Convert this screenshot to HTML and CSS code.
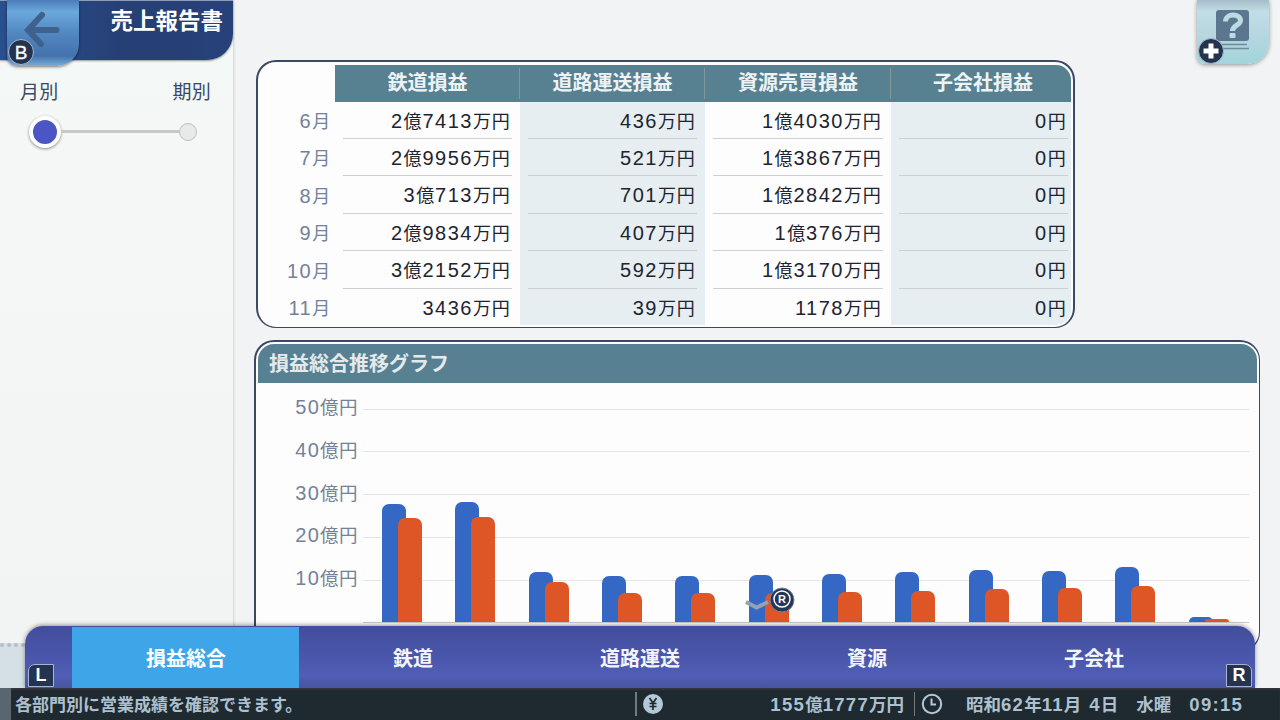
FILE: index.html
```
<!DOCTYPE html>
<html lang="ja">
<head>
    <meta charset="UTF-8">
    <meta name="viewport" content="width=device-width, initial-scale=1.0">
    <title>売上報告書</title>
    <link rel="stylesheet" href="styles.css">
</head>
<body>
    <div class="screen">
        <div class="main">
            <aside class="sidebar">
                <header class="title">
                    <h1>売上報告書</h1>
                    <button class="back">
                        <svg width="72" height="66" viewBox="0 0 72 66">
                            <path d="M49.500 30H22M35 15L21 30L34 44" fill="none" stroke="#3f628c" stroke-width="6" stroke-linecap="round" stroke-linejoin="miter"/>
                        </svg>
                    </button>
                    <span class="key-round key-b">B</span>
                </header>
                <div class="switch-labels"><span>月別</span><span>期別</span></div>
                <div class="slider">
                    <span class="knob"></span>
                    <span class="track"></span>
                    <span class="stop"></span>
                </div>
                <div class="ground"></div>
            </aside>
            <div class="content">
                <section class="table-panel">
                    <div class="months">
                        <div>6月</div>
                        <div>7月</div>
                        <div>8月</div>
                        <div>9月</div>
                        <div>10月</div>
                        <div>11月</div>
                    </div>
                    <div class="columns" id="columns"></div>
                </section>
                <section class="chart-panel">
                    <h2>損益総合推移グラフ</h2>
                    <div class="chart">
                        <div class="scale">
                            <div>50億円</div>
                            <div>40億円</div>
                            <div>30億円</div>
                            <div>20億円</div>
                            <div>10億円</div>
                        </div>
                        <div class="plot">
                            <div class="line"></div>
                            <div class="line"></div>
                            <div class="line"></div>
                            <div class="line"></div>
                            <div class="line"></div>
                            <div class="bars" id="bars"></div>
                        </div>
                    </div>
                </section>
            </div>
        </div>
        <button class="help">
            <svg width="72" height="64" viewBox="0 0 72 64">
                <rect x="19" y="10" width="33" height="31" rx="3" fill="#5d7690"/>
                <path d="M28.500 21.500C28.500 13 43.500 13 43.500 20.500C43.500 25.500 35.500 25 35.500 31" fill="none" stroke="#b9dbe4" stroke-width="5"/>
                <rect x="32.500" y="33" width="6" height="5" rx="1" fill="#b9dbe4"/>
                <path d="M24 44.500H50M24 48.500H52" stroke="#6d8b9d" stroke-width="1.500"/>
            </svg>
        </button>
        <span class="key-round key-plus">
            <svg width="16" height="16" viewBox="0 0 16 16"><path d="M8 0.500V15.500M0.500 8H15.500" stroke="#fff" stroke-width="5"/></svg>
        </span>
        <div class="scroll-cue">
            <svg width="26" height="14" viewBox="0 0 26 14"><path d="M2 3L12.500 8.500L24 3" fill="none" stroke="#8fa3b3" stroke-width="4"/></svg>
            <svg width="26" height="26" viewBox="0 0 26 26">
                <circle cx="13" cy="13" r="12" fill="#24365a" stroke="#7b8497"/>
                <circle cx="13" cy="12" r="8" fill="none" stroke="#fff" stroke-width="1.500"/>
                <text x="13" y="16" class="stick">R</text>
            </svg>
        </div>
        <nav class="tabs">
            <button class="tab active">損益総合</button>
            <button class="tab">鉄道</button>
            <button class="tab">道路運送</button>
            <button class="tab">資源</button>
            <button class="tab">子会社</button>
            <span class="key-square key-l">L</span>
            <span class="key-square key-r">R</span>
        </nav>
        <footer class="status">
            <p class="hint">各部門別に営業成績を確認できます。</p>
            <div class="money">
                <svg width="20" height="20" viewBox="0 0 20 20">
                    <circle cx="10" cy="10" r="10" fill="#b3c8d9"/>
                    <path d="M6.500 4L10 9L13.500 4M10 9V16M6.500 9.500H13.500M6.500 12.500H13.500" fill="none" stroke="#1e2930" stroke-width="1.700"/>
                </svg>
                <span class="amount">155億1777万円</span>
            </div>
            <div class="date">
                <svg width="22" height="22" viewBox="0 0 22 22">
                    <circle cx="11" cy="11" r="9.200" fill="none" stroke="#b3c8d9" stroke-width="2"/>
                    <path d="M10.500 5.500V11.500H15" fill="none" stroke="#b3c8d9" stroke-width="2"/>
                </svg>
                <span class="day">昭和62年11月 4日</span>
                <span class="week">水曜</span>
                <span class="time">09:15</span>
            </div>
        </footer>
    </div>
    <script>
        const columns = [
            ['鉄道損益', '2億7413万円', '2億9956万円', '3億713万円', '2億9834万円', '3億2152万円', '3436万円'],
            ['道路運送損益', '436万円', '521万円', '701万円', '407万円', '592万円', '39万円'],
            ['資源売買損益', '1億4030万円', '1億3867万円', '1億2842万円', '1億376万円', '1億3170万円', '1178万円'],
            ['子会社損益', '0円', '0円', '0円', '0円', '0円', '0円']
        ];

        // bar heights in px: income, expense
        const bars = [
            [118, 104], [120, 105], [50, 40], [46, 29], [46, 29], [47, 29],
            [48, 30], [50, 31], [52, 33], [51, 34], [55, 36], [5, 3]
        ];

        // digits are set slightly larger than the kanji
        function digits(text) {
            return text.replace(/\d+/g, '<span class="num">$&</span>');
        }

        document.getElementById('columns').innerHTML = columns.map(([head, ...cells]) =>
            `<div class="column"><h3>${head}</h3>${cells.map(c => `<div class="cell">${digits(c)}</div>`).join('')}</div>`
        ).join('');

        document.getElementById('bars').innerHTML = bars.map(([income, expense]) =>
            `<div class="group"><div class="bar income" style="height: ${income}px"></div><div class="bar expense" style="height: ${expense}px"></div></div>`
        ).join('');

        document.querySelectorAll('.months div, .scale div, .amount, .day').forEach(element => {
            element.innerHTML = digits(element.textContent);
        });
    </script>
</body>
</html>
```
FILE: styles.css
```
* {
    box-sizing: border-box;
}
body {
    margin: 0;
    font-family: "Liberation Sans", "Noto Sans CJK JP", sans-serif;
    color: #1d2430;
    overflow: hidden;
}
h1, h2, h3, p {
    margin: 0;
}
button {
    border: none;
    padding: 0;
    font-family: inherit;
}
svg {
    display: block;
}
.screen {
    position: relative;
    width: 1280px;
    height: 720px;
    overflow: hidden;
    background-color: #f2f3f5;
}
.main {
    display: flex;
    height: 688px;
}

/* left side */
.sidebar {
    display: flex;
    flex-direction: column;
    width: 233px;
    background: linear-gradient(#f4f8f7, #f3f6f5 50%, #f2f3f3);
    box-shadow: 0 0 3px rgba(0, 0, 0, 0.25);
}
.title {
    position: relative;
    height: 60px;
    padding: 7px 10px 0 0;
    background: linear-gradient(90deg, #28508f, #263f74 55%, #27417a);
    border-top: 1px solid #8d9bb8;
    border-bottom-right-radius: 26px;
    box-shadow: 0 1px 2px rgba(0, 0, 0, 0.4);
}
.title h1 {
    font-size: 22.5px;
    line-height: 28px;
    text-align: right;
    color: #fff;
}
.back {
    position: absolute;
    left: 7px;
    top: -1px;
    width: 72px;
    height: 66px;
    background: linear-gradient(#4a7cb8, #6ba8dc 18%, #5287c2 50%, #4472ad 85%, #78b0d8);
    border-bottom-right-radius: 22px;
    border-bottom-left-radius: 10px;
    box-shadow: 0 1px 3px rgba(0, 0, 0, 0.5);
}
.key-round {
    position: absolute;
    display: flex;
    align-items: center;
    justify-content: center;
    width: 26px;
    height: 26px;
    border: 1.5px solid #a9b9cd;
    border-radius: 50%;
    background-color: #24334f;
    color: #fff;
}
.key-b {
    left: 8px;
    top: 38px;
    padding-top: 1px;
    font-size: 19px;
    -webkit-text-stroke: 0.3px #fff;
}
.switch-labels {
    display: flex;
    justify-content: space-between;
    padding: 19px 22px 0 20px;
    font-size: 19px;
    letter-spacing: 0.3px;
    line-height: 28px;
    color: #3c4962;
}
.slider {
    display: flex;
    align-items: center;
    margin: 9px 36px 0 29px;
}
.knob {
    width: 32px;
    height: 32px;
    border: 4px solid #fff;
    border-radius: 50%;
    background-color: #4c55c4;
    box-shadow: 0 1px 3px rgba(0, 0, 0, 0.45);
}
.track {
    flex: 1;
    height: 3px;
    margin-top: -2px;
    background-color: #c6c8c9;
}
.stop {
    width: 18px;
    height: 18px;
    border: 1.5px solid #bdbfc0;
    border-radius: 50%;
    background-color: #e8e9e9;
}
.ground {
    width: 25px;
    height: 45px;
    margin-top: auto;
    border-top: 4px dotted #b5bec8;
    background-color: #d5dfe6;
}

/* table */
.content {
    display: flex;
    flex-direction: column;
    gap: 12px;
    padding: 60px 19px 0 22px;
}
.table-panel {
    display: flex;
    width: 819px;
    height: 268px;
    flex-shrink: 0;
    margin-left: 1px;
    padding: 3px 2px 2px 0;
    border: 2px solid #3b4a62;
    border-bottom-width: 1.5px;
    border-radius: 20px;
    background-color: #fdfdfd;
}
.months {
    width: 77px;
    padding: 37px 4px 0 0;
    font-size: 18px;
    letter-spacing: 0.8px;
    line-height: 38px;
    text-align: right;
    color: #74819a;
}
.months div {
    height: 37.4px;
}
.num {
    font-size: 20px;
    letter-spacing: 1.5px;
}
.columns {
    display: grid;
    grid-template-columns: 185px 185px 186px 180px;
    border-radius: 0 15px 15px 0;
    overflow: hidden;
}
.column h3 {
    position: relative;
    height: 37px;
    background-color: #578191;
    color: #edf2f4;
    font-size: 20px;
    line-height: 37px;
    text-align: center;
}
.column:last-child h3 {
    padding-left: 4px;
}
.column + .column h3::before {
    content: "";
    position: absolute;
    left: -1px;
    top: 3px;
    width: 1px;
    height: 31px;
    background-color: #84979f;
}
.column:nth-child(even) {
    background-color: #e6eef1;
}
.cell {
    height: 37.4px;
    margin: 0 8px;
    padding-right: 1.5px;
    border-bottom: 1.5px solid #ccd0d2;
    font-size: 18px;
    letter-spacing: 0.8px;
    line-height: 38px;
    text-align: right;
    white-space: nowrap;
}
.cell:nth-child(2) {
    height: 37px;
}
.column:last-child .cell {
    margin-right: 3px;
}
.cell:last-child {
    border-bottom: none;
}

/* chart */
.chart-panel {
    width: 1006px;
    height: 312px;
    flex-shrink: 0;
    margin-left: -1px;
    padding: 2px;
    border: 2px solid #3b4764;
    border-right-width: 1.5px;
    border-radius: 20px;
    background-color: #fdfdfd;
}
.chart-panel h2 {
    height: 39px;
    padding-left: 11px;
    border-radius: 16px 16px 0 0;
    background-color: #578193;
    color: #e6e9ea;
    font-size: 20px;
    line-height: 41px;
}
.chart {
    display: flex;
    padding: 4px 8px 0 0;
}
.scale {
    width: 105px;
    padding-right: 5px;
    font-size: 18.5px;
    letter-spacing: 0.5px;
    line-height: 40px;
    text-align: right;
    white-space: nowrap;
    color: #74819a;
}
.scale div {
    height: 42.75px;
}
.scale .num {
    letter-spacing: 1.2px;
}
.plot {
    position: relative;
    flex: 1;
    height: 236px;
    padding-top: 21.5px;
    border-bottom: 1px solid #c9cacc;
}
.line {
    height: 42.75px;
    border-top: 1.5px solid #e4e5e7;
}
.bars {
    position: absolute;
    left: 0;
    right: 0;
    bottom: 0;
    display: flex;
    padding-left: 19px;
}
.group {
    display: flex;
    flex: 0 0 73.35px;
    align-items: flex-end;
}
.bar {
    width: 24px;
    border-radius: 7px 7px 0 0;
}
.income {
    background-color: #3568c5;
}
.expense {
    margin-left: -8px;
    background-color: #df5626;
}

/* things over the page */
.help {
    position: absolute;
    left: 1197px;
    top: 0;
    width: 72px;
    height: 64px;
    background: linear-gradient(#a5bdca, #c2dde6 18%, #b6d6e0 55%, #a1d5da);
    border-bottom-right-radius: 22px;
    border-bottom-left-radius: 8px;
    box-shadow: 0 1px 4px rgba(0, 0, 0, 0.4);
}
.key-plus {
    left: 1198px;
    top: 38px;
}
.scroll-cue {
    position: absolute;
    left: 744px;
    top: 587px;
    display: flex;
    align-items: center;
}
.scroll-cue svg:first-child {
    margin-top: 11px;
}
.scroll-cue svg:last-child {
    margin-left: -1px;
}
.stick {
    fill: #fff;
    font-size: 11px;
    font-weight: bold;
    text-anchor: middle;
}
.tabs {
    position: absolute;
    left: 25px;
    top: 626px;
    display: flex;
    width: 1230px;
    height: 62px;
    padding: 0 47px;
    border-radius: 18px 18px 0 0;
    background: linear-gradient(#424e9c, #4a56aa 50%, #505eb6 80%, #48559f);
    box-shadow: 0 -1px 4px rgba(0, 0, 0, 0.4);
}
.tab {
    width: 227px;
    padding-left: 1px;
    background: none;
    color: #f4f5fb;
    font-size: 20px;
    font-weight: bold;
}
.tab.active {
    margin-top: 1px;
    background-color: #3da5e8;
    color: #fff;
}
.key-square {
    position: absolute;
    bottom: 1px;
    width: 26px;
    height: 23px;
    border: 1.5px solid #aab3cf;
    background-color: #24334f;
    color: #fff;
    font-size: 18px;
    font-weight: bold;
    line-height: 21px;
    text-align: center;
}
.key-l {
    left: 3px;
    border-top-left-radius: 7px;
}
.key-r {
    right: 3px;
    border-top-right-radius: 7px;
}

/* bottom bar */
.status {
    position: relative;
    display: flex;
    align-items: center;
    height: 32px;
    border-left: 11px solid #59666f;
    background-color: #1e2930;
    box-shadow: inset 0 2px 2px #34363f;
    color: #adc0cf;
    font-size: 17px;
    font-weight: bold;
    line-height: 30px;
}
.hint {
    width: 624px;
    padding: 3px 0 0 4px;
}
.money, .date {
    display: flex;
    align-items: center;
    height: 24px;
    font-size: 17.5px;
}
.money {
    justify-content: space-between;
    width: 279px;
    padding: 0 10px 0 6px;
    border-left: 2px solid #77797a;
}
.amount, .day, .week, .time {
    padding-top: 2px;
}
.date {
    padding-left: 6px;
    border-left: 1px solid #77797a;
}
.status .num, .time {
    font-size: 18.5px;
    letter-spacing: 1.3px;
}
.day {
    margin-left: 23px;
    white-space: pre;
    word-spacing: 3px;
}
.week {
    margin-left: 18px;
}
.time {
    margin-left: 18px;
}
```
